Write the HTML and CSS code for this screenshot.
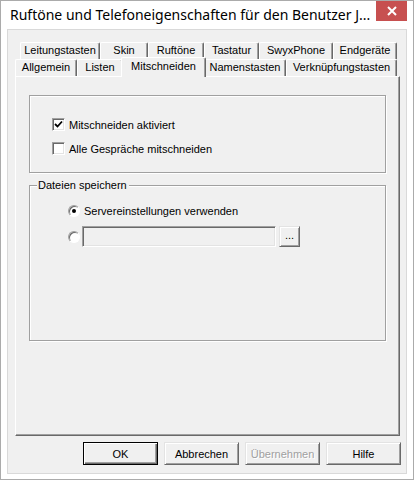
FILE: index.html
```html
<!DOCTYPE html>
<html lang="de">
<head>
<meta charset="utf-8">
<title>Ruftöne und Telefoneigenschaften</title>
<link rel="stylesheet" href="styles.css">
</head>
<body>
<div class="window">
  <div class="titlebar">
    <span class="title">Ruftöne und Telefoneigenschaften für den Benutzer J...</span>
    <span class="close"><svg width="10" height="10" viewBox="0 0 10 10"><path d="M1 1 L9 9 M9 1 L1 9" stroke="#fff" stroke-width="2"/></svg></span>
  </div>
  <div class="client">
    <div class="tabctl">
      <div class="tabrow row1">
        <div class="tab" style="width:80px">Leitungstasten</div>
        <div class="tab" style="width:48px">Skin</div>
        <div class="tab" style="width:56px">Ruftöne</div>
        <div class="tab" style="width:55px">Tastatur</div>
        <div class="tab" style="width:74px">SwyxPhone</div>
        <div class="tab" style="width:64px">Endgeräte</div>
      </div>
      <div class="tabrow row2">
        <div class="tab" style="width:62px">Allgemein</div>
        <div class="tab" style="width:46px">Listen</div>
        <div class="tab selected" style="width:85px">Mitschneiden</div>
        <div class="tab" style="width:82px">Namenstasten</div>
        <div class="tab" style="width:111px">Verknüpfungstasten</div>
      </div>
      <div class="panel">
        <div class="group group1">
          <label class="opt"><span class="cb checked"><svg width="9" height="9" viewBox="0 0 9 9"><path d="M1 4 L3.5 6.5 L8 1.5" fill="none" stroke="#000" stroke-width="1.8"/></svg></span>Mitschneiden aktiviert</label>
          <label class="opt"><span class="cb"></span>Alle Gespräche mitschneiden</label>
        </div>
        <div class="group group2">
          <span class="legend">Dateien speichern</span>
          <label class="opt radio-opt"><span class="rb checked"></span>Servereinstellungen verwenden</label>
          <div class="opt path-row">
            <span class="rb"></span>
            <span class="field"></span>
            <span class="btn small">...</span>
          </div>
        </div>
      </div>
    </div>
    <div class="buttons">
      <span class="btn default">OK</span>
      <span class="btn">Abbrechen</span>
      <span class="btn disabled">Übernehmen</span>
      <span class="btn">Hilfe</span>
    </div>
  </div>
</div>
</body>
</html>
```

FILE: styles.css
```css
* { box-sizing: border-box; }
html, body { margin: 0; padding: 0; background: #fff; }
.window {
  width: 414px;
  height: 480px;
  border: 1px solid #ababab;
  background: #fff;
  display: flex;
  flex-direction: column;
}
.titlebar {
  height: 28px;
  display: flex;
  align-items: flex-start;
  justify-content: space-between;
}
.title {
  font-family: "Noto Sans", "Open Sans", sans-serif;
  font-size: 14px;
  color: #000;
  padding-left: 9px;
  line-height: 28px;
  white-space: nowrap;
  letter-spacing: 0;
}
.close {
  width: 31px;
  height: 20px;
  margin-right: 6px;
  background: #c75050;
  display: flex;
  align-items: center;
  justify-content: center;
}
.client {
  flex: 1;
  margin: 0 6px 5px 6px;
  border: 1px solid #d9d9d9;
  background: #f0f0f0;
  font-family: "Liberation Sans", Arial, sans-serif;
  font-size: 11px;
  color: #000;
  display: flex;
  flex-direction: column;
}
.tabctl {
  margin: 12px 0 0 7px;
  width: 385px;
}
.tabrow {
  display: flex;
  height: 17px;
}
.row1 { padding-left: 5px; }
.tab {
  height: 17px;
  border-top: 1px solid #fff;
  border-left: 1px solid #fff;
  border-right: 1px solid #696969;
  box-shadow: inset -1px 0 0 #a0a0a0;
  border-radius: 2px 2px 0 0;
  text-align: center;
  line-height: 15px;
  white-space: nowrap;
  background: #f0f0f0;
}
.tab.selected {
  height: 20px;
  margin: -2px -2px -1px -2px;
  position: relative;
  z-index: 1;
  line-height: 16px;
}
.panel {
  height: 360px;
  border: 1px solid;
  border-color: #fff #696969 #696969 #fff;
  box-shadow: inset -1px -1px 0 #a0a0a0;
  padding-top: 18px;
}
.group {
  margin-left: 13px;
  width: 357px;
  border: 1px solid #a0a0a0;
  box-shadow: inset 1px 1px 0 #fff, 1px 1px 0 #fff;
}
.group1 {
  height: 78px;
  padding: 22px 0 0 22px;
  display: flex;
  flex-direction: column;
  gap: 11px;
}
.opt {
  display: flex;
  align-items: center;
  height: 13px;
  white-space: nowrap;
}
.cb {
  width: 13px;
  height: 13px;
  margin-right: 4px;
  background: #fff;
  border: 1px solid;
  border-color: #a0a0a0 #fff #fff #a0a0a0;
  box-shadow: inset 1px 1px 0 #696969, inset -1px -1px 0 #e3e3e3;
  display: flex;
  align-items: center;
  justify-content: center;
}
.group2 {
  margin-top: 12px;
  height: 156px;
  display: flex;
  flex-direction: column;
}
.legend {
  align-self: flex-start;
  margin: -7px 0 0 7px;
  padding: 0 2px 0 1px;
  background: #f0f0f0;
  line-height: 13px;
  height: 13px;
}
.radio-opt {
  margin: 12px 0 0 38px;
}
.rb {
  width: 12px;
  height: 12px;
  border-radius: 50%;
  margin-right: 4px;
  background: #fff;
  border: 1px solid;
  border-color: #a0a0a0 #fff #fff #a0a0a0;
  box-shadow: inset 1px 1px 0 #696969;
  display: flex;
  align-items: center;
  justify-content: center;
  flex-shrink: 0;
}
.rb.checked::after {
  content: "";
  width: 4px;
  height: 4px;
  border-radius: 50%;
  background: #000;
}
.path-row {
  margin: 9px 0 0 38px;
  height: 21px;
}
.path-row .rb { margin-right: 2px; }
.field {
  width: 194px;
  height: 21px;
  background: #f0f0f0;
  border: 1px solid;
  border-color: #a0a0a0 #fff #fff #a0a0a0;
  box-shadow: inset 1px 1px 0 #696969, inset -1px -1px 0 #e3e3e3;
  margin-right: 3px;
}
.btn {
  width: 75px;
  height: 23px;
  display: flex;
  align-items: center;
  justify-content: center;
  background: #f0f0f0;
  border: 1px solid;
  border-color: #e3e3e3 #696969 #696969 #e3e3e3;
  box-shadow: inset 1px 1px 0 #fff, inset -1px -1px 0 #a0a0a0;
  font-size: 11px;
}
.btn.small {
  width: 21px;
  height: 21px;
  padding-bottom: 3px;
}
.btn.default {
  border-color: #000;
  box-shadow: inset 1px 1px 0 #fff, inset -1px -1px 0 #696969, inset -2px -2px 0 #a0a0a0;
}
.btn.disabled {
  color: #a0a0a0;
  text-shadow: 1px 1px 0 #fff;
}
.buttons {
  display: flex;
  gap: 6px;
  margin: 6px 0 0 75px;
}
```
